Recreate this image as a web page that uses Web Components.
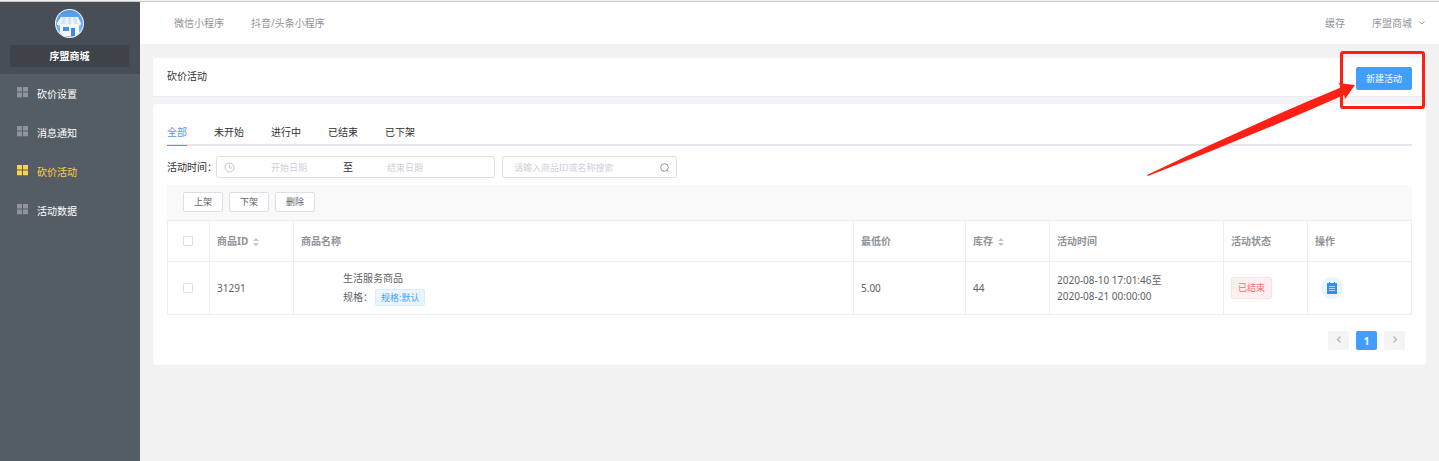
<!DOCTYPE html>
<html lang="zh-CN">
<head>
<meta charset="utf-8">
<title>砍价活动</title>
<style>
  html, body { margin: 0; min-height: 100%; }
  body { background: #f2f2f2; color: #303133; font: 10px/16px "Noto Sans", "Noto Sans CJK SC", sans-serif; }
</style>
</head>
<body>
<shop-admin></shop-admin>
<script>
const base = `
  *, *::before, *::after { box-sizing: border-box; }
  button, input { font: inherit; color: inherit; margin: 0; padding: 0; border: 0; background: none; outline: 0; }
  button { cursor: pointer; white-space: nowrap; }
  a { color: inherit; text-decoration: none; }
  svg { display: block; flex: none; }
`;
function define(name, css, html) {
  customElements.define(name, class extends HTMLElement {
    constructor() {
      super();
      this.attachShadow({ mode: "open" });
    }
    connectedCallback() {
      const t = document.createElement("template");
      t.innerHTML = `<style>${base}${css}</style>${html}`;
      this.shadowRoot.replaceChildren(t.content.cloneNode(true));
    }
  });
}

define("menu-item", `
  :host { display: block; color: #fff; --icon: #909399; }
  :host([active]) { color: #ffd04b; --icon: #ffd04b; }
  a { display: flex; align-items: center; gap: 9px; height: 39px; padding-left: 17px; }
  svg { fill: var(--icon); }
`, `<a href="#"><svg width="11" height="13" viewBox="0 0 11 13"><path d="M0 0h5v4.6H0zM6 0h5v4.6H6zM0 5.6h5v4.6H0zM6 5.6h5v4.6H6z"/></svg><slot></slot></a>`);

define("shop-logo", `:host { display: block; }`, `
<svg width="29" height="29" viewBox="0 0 29 29" role="img" aria-label="logo">
  <defs>
    <linearGradient id="g" x1="0" y1="0" x2="0" y2="1"><stop offset="0" stop-color="#4a97e6"/><stop offset="1" stop-color="#8cc0f5"/></linearGradient>
    <clipPath id="c"><circle cx="14.5" cy="14.5" r="13.5"/></clipPath>
  </defs>
  <circle cx="14.5" cy="14.5" r="14.5" fill="#e9f3fd"/>
  <g clip-path="url(#c)">
    <rect width="29" height="29" fill="url(#g)"/>
    <path d="M5 14h19v13H5z" fill="#f4f9ff"/>
    <path d="M6 8h17l3 6a2 2 0 0 1-4 1 2 2 0 0 1-4 0 2 2 0 0 1-4 0 2 2 0 0 1-4 0 2 2 0 0 1-4 0 2 2 0 0 1-4-1z" fill="#eef6ff"/>
    <path d="M8 8h3l-1 7H6zM13 8h3v7h-3zM18 8h3l2 7h-4z" fill="#cfe4fb"/>
    <path d="M8 18h6v4H8z" fill="#4a93e4"/>
    <path d="M16 19h4v8h-4z" fill="#3d86dd"/>
  </g>
</svg>`);

define("side-bar", `
  :host { display: block; background: #545c64; }
  header { display: flex; flex-direction: column; align-items: center; gap: 7px; padding: 7px 11px 7px 10px; background: #484e55; }
  .name { align-self: stretch; line-height: 22px; text-align: center; color: #fff; font-weight: 700; background: #3e4249; border-radius: 2px; }
`, `
<header><shop-logo></shop-logo><div class="name">序盟商城</div></header>
<nav>
  <menu-item>砍价设置</menu-item>
  <menu-item>消息通知</menu-item>
  <menu-item active>砍价活动</menu-item>
  <menu-item>活动数据</menu-item>
</nav>`);

define("top-bar", `
  :host { display: flex; justify-content: space-between; height: 42px; padding: 0 14px 0 34px; background: #fff; color: #909399; }
  nav, div { display: flex; align-items: center; gap: 27px; }
  button { display: flex; align-items: center; gap: 7px; }
`, `
<nav><a href="#">微信小程序</a><a href="#">抖音/头条小程序</a></nav>
<div><a href="#">缓存</a>
<button type="button">序盟商城<svg width="6" height="6" viewBox="0 0 6 6" fill="none" stroke="#a5a8ae"><path d="M.5 1.5 3 4l2.5-2.5"/></svg></button></div>`);

define("ui-button", `
  :host { display: block; }
  button { display: block; width: 40px; height: 20px; font-size: 9px; line-height: 18px; color: #606266; background: #fff; border: 1px solid #dcdfe6; border-radius: 2px; }
  :host([type=primary]) button { width: 56px; height: 23px; color: #fff; background: #409eff; border-color: #409eff; }
`, `<button type="button"><slot></slot></button>`);

define("ui-tag", `
  :host { display: inline-block; font-size: 9px; line-height: 15px; padding: 0 5px; border: 1px solid #d9ecff; border-radius: 2px; background: #ecf5ff; color: #409eff; white-space: nowrap; }
  :host([type=danger]) { line-height: 20px; padding: 0 6px; background: #fef0f0; border-color: #fde2e2; color: #f56c6c; }
`, `<slot></slot>`);

define("call-out", `
  :host { display: block; position: relative; }
  .frame { position: absolute; inset: -16px -13px -19px -16px; border: 3px solid #ff2015; border-radius: 3px; pointer-events: none; }
  svg { position: absolute; right: 56px; top: 14px; pointer-events: none; }
`, `<slot></slot><div class="frame"></div>
<svg width="210" height="96" viewBox="0 0 210 96" fill="#ff2015"><path d="M209 4 192 2l4 4Q97 47 1 94l1 1Q103 56 198 14l1 4z"/></svg>`);

define("page-title", `
  :host { display: flex; justify-content: space-between; align-items: flex-start; padding: 9px 14px 6px; background: #fff; border-bottom: 1px solid #e6ebf5; border-radius: 3px 3px 0 0; }
  h1 { margin: 0; font-size: 10px; line-height: 18px; font-weight: 400; }
`, `<h1>砍价活动</h1><call-out><ui-button type="primary">新建活动</ui-button></call-out>`);

define("tab-bar", `
  :host { display: flex; gap: 27px; border-bottom: 2px solid #e4e7ed; }
  button { height: 28px; margin-bottom: -2px; border-bottom: 1px solid transparent; }
  button[aria-selected=true] { color: #409eff; border-color: #409eff; }
`, `
<button role="tab" aria-selected="true">全部</button><button role="tab">未开始</button><button role="tab">进行中</button><button role="tab">已结束</button><button role="tab">已下架</button>`);

define("filter-bar", `
  :host { display: flex; align-items: center; margin-top: 10px; }
  label { flex: 0 0 49px; min-width: 0; white-space: nowrap; }
  .box { display: flex; align-items: center; height: 22px; border: 1px solid #dcdfe6; border-radius: 3px; background: #fff; }
  .range { width: 279px; padding-left: 7px; }
  .range svg { margin-right: 2px; }
  .range input { width: 104px; text-align: center; }
  .range input:last-child { width: 100px; }
  .range span { flex: 0 0 14px; text-align: center; }
  .search { width: 175px; margin-left: 7px; padding: 0 7px 0 11px; }
  .search input { flex: 1; min-width: 0; }
  input { font-size: 9px; height: 20px; }
  input::placeholder { color: #ced1d8; opacity: 1; }
`, `
<label for="from">活动时间：</label>
<div class="box range">
  <svg width="11" height="11" viewBox="0 0 11 11" fill="none" stroke="#c0c4cc"><circle cx="5.5" cy="5.5" r="4.5"/><path d="M5.5 2.5V6H8"/></svg>
  <input id="from" type="text" placeholder="开始日期"><span>至</span><input type="text" placeholder="结束日期" aria-label="结束日期">
</div>
<div class="box search">
  <input type="text" placeholder="请输入商品ID或名称搜索" aria-label="搜索">
  <svg width="9" height="9" viewBox="0 0 9 9" fill="none" stroke="#909399"><circle cx="4.5" cy="4.5" r="3.8"/><path d="m6.5 7 2 1.5"/></svg>
</div>`);

define("tool-bar", `
  :host { display: flex; gap: 6px; margin-top: 7px; padding: 7px 16px 8px; background: #f9f9f9; }
`, `<ui-button>上架</ui-button><ui-button>下架</ui-button><ui-button>删除</ui-button>`);

define("sort-carets", `:host { display: inline-block; margin-left: 5px; vertical-align: middle; }`,
`<svg width="6" height="10" viewBox="0 0 6 10" fill="#c0c4cc"><path d="M0 4l3-3 3 3zM0 6h6L3 9z"/></svg>`);

define("goods-table", `
  :host { display: block; color: #606266; }
  table { width: 100%; table-layout: fixed; border-collapse: collapse; }
  th, td { padding: 0 7px; border: 1px solid #ebeef5; text-align: left; white-space: nowrap; }
  th { height: 41px; color: #909399; font-weight: 700; }
  td { height: 53px; }
  th.pick, td.pick { padding: 0 2px 0 0; }
  input { appearance: none; display: block; width: 10px; height: 10px; margin: 0 auto; border: 1px solid #dcdfe6; border-radius: 1px; background: #fff; }
  .goods { padding-left: 49px; line-height: 19px; }
  .spec { display: flex; align-items: center; gap: 2px; }
  .act { display: flex; align-items: center; justify-content: center; width: 22px; height: 22px; margin-left: 6px; border-radius: 50%; background: #ecf5ff; }
  .c42 { width: 42px; } .c84 { width: 84px; } .c112 { width: 112px; } .c174 { width: 174px; } .c104 { width: 104px; }
`, `
<table>
  <colgroup><col class="c42"><col class="c84"><col><col class="c112"><col class="c84"><col class="c174"><col class="c84"><col class="c104"></colgroup>
  <thead><tr><th class="pick"><input type="checkbox" aria-label="全选"></th><th>商品ID<sort-carets></sort-carets></th><th>商品名称</th><th>最低价</th><th>库存<sort-carets></sort-carets></th><th>活动时间</th><th>活动状态</th><th>操作</th></tr></thead>
  <tbody><tr>
    <td class="pick"><input type="checkbox" aria-label="选择 31291"></td>
    <td>31291</td>
    <td class="goods"><div>生活服务商品</div><div class="spec">规格：<ui-tag>规格:默认</ui-tag></div></td>
    <td>5.00</td><td>44</td>
    <td>2020-08-10 17:01:46至<br>2020-08-21 00:00:00</td>
    <td><ui-tag type="danger">已结束</ui-tag></td>
    <td><button class="act" type="button" aria-label="详情"><svg width="10" height="12" viewBox="0 0 10 12"><path fill="#2a90fa" d="M0 1h2V0h1v1h4V0h1v1h2v11H0z"/><path stroke="#b5d8ff" d="M2 4.5h6M2 6.5h6M2 8.5h6"/></svg></button></td>
  </tr></tbody>
</table>`);

define("page-nav", `
  :host { display: flex; justify-content: flex-end; gap: 7px; margin-top: 16px; padding-right: 7px; }
  button { display: flex; align-items: center; justify-content: center; width: 21px; height: 19px; border-radius: 2px; background: #f4f4f5; font-weight: 700; }
  .on { background: #409eff; color: #fff; }
  svg { fill: none; stroke: #b4b7be; margin-bottom: 2px; }
`, `
<button type="button" aria-label="上一页"><svg width="6" height="7" viewBox="0 0 6 7"><path stroke-width="1.3" d="M4.5 .5l-3 3 3 3"/></svg></button>
<button type="button" class="on">1</button>
<button type="button" aria-label="下一页"><svg width="6" height="7" viewBox="0 0 6 7"><path stroke-width="1.3" d="M1.5 .5l3 3-3 3"/></svg></button>`);

define("content-card", `:host { display: block; padding: 14px 14px 15px; background: #fff; border-radius: 3px; }`, `<slot></slot>`);

define("shop-admin", `
  :host { display: grid; grid-template: 2px 1fr / 140px 1fr; min-height: 100vh; }
  .edge { grid-column: 1 / 3; border-bottom: 1px solid #c8c8c8; }
  main { display: flex; flex-direction: column; gap: 7px; padding: 14px 13px; }
`, `
<div class="edge"></div>
<side-bar></side-bar>
<div>
  <top-bar></top-bar>
  <main>
    <page-title></page-title>
    <content-card><tab-bar role="tablist"></tab-bar><filter-bar></filter-bar><tool-bar></tool-bar><goods-table></goods-table><page-nav></page-nav></content-card>
  </main>
</div>`);
</script>
</body>
</html>
